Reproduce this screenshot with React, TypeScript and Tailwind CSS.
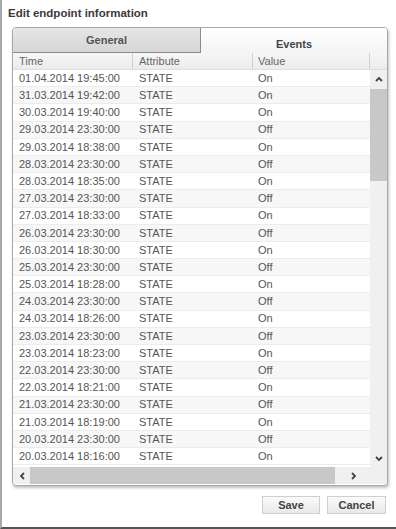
import React from "react"

const rows: [string, string][] = [
    ["01.04.2014 19:45:00", "On"],
    ["31.03.2014 19:42:00", "On"],
    ["30.03.2014 19:40:00", "On"],
    ["29.03.2014 23:30:00", "Off"],
    ["29.03.2014 18:38:00", "On"],
    ["28.03.2014 23:30:00", "Off"],
    ["28.03.2014 18:35:00", "On"],
    ["27.03.2014 23:30:00", "Off"],
    ["27.03.2014 18:33:00", "On"],
    ["26.03.2014 23:30:00", "Off"],
    ["26.03.2014 18:30:00", "On"],
    ["25.03.2014 23:30:00", "Off"],
    ["25.03.2014 18:28:00", "On"],
    ["24.03.2014 23:30:00", "Off"],
    ["24.03.2014 18:26:00", "On"],
    ["23.03.2014 23:30:00", "Off"],
    ["23.03.2014 18:23:00", "On"],
    ["22.03.2014 23:30:00", "Off"],
    ["22.03.2014 18:21:00", "On"],
    ["21.03.2014 23:30:00", "Off"],
    ["21.03.2014 18:19:00", "On"],
    ["20.03.2014 23:30:00", "Off"],
    ["20.03.2014 18:16:00", "On"],
]

function Chevron({ dir }: { dir: "up" | "down" | "left" | "right" }) {
    const d = {
        up: "M2 7 L5 4 L8 7",
        down: "M2 4 L5 7 L8 4",
        left: "M7 2 L4 5 L7 8",
        right: "M4 2 L7 5 L4 8",
    }[dir]
    return (
        <svg width={10} height={10} viewBox="0 0 10 10" fill="none">
            <path d={d} stroke="#444" strokeWidth={1.8} />
        </svg>
    )
}

export default function App() {
    return (
        <div
            className="relative w-[396px] h-[529px] bg-white border-l-2 border-l-[#a8a8a8] border-b-2 border-b-[#555] overflow-hidden"
            style={{ fontFamily: "'Liberation Sans', Arial, sans-serif" }}
        >
            <div className="pl-[6px] pt-[5px] h-[27px] text-[11.5px] font-bold text-[#3a3a3a] leading-[16px]">
                Edit endpoint information
            </div>

            <div className="ml-[10px] w-[376px] h-[459px] border border-[#a9a9a9] rounded-[4px] shadow-[1px_2px_3px_rgba(0,0,0,0.25)] flex flex-col overflow-hidden bg-white">
                {/* tabs */}
                <div className="flex h-[25px] shrink-0">
                    <div className="w-[188px] flex items-center justify-center bg-gradient-to-b from-[#e6e6e6] to-[#d6d6d6] border-r border-b border-[#8c8c8c] text-[11px] font-bold text-[#555]">
                        General
                    </div>
                    <div className="flex-1 flex items-end justify-center pb-[1px] bg-gradient-to-b from-white to-[#f4f4f4] text-[11px] font-bold text-[#444]">
                        Events
                    </div>
                </div>

                {/* header */}
                <div className="flex h-[17px] shrink-0 bg-gradient-to-b from-[#f6f6f6] to-[#ececec] border-b border-[#dedede] text-[11px] text-[#666]">
                    <div className="w-[120px] pl-[6px] border-r border-[#d0d0d0] leading-[16px]">Time</div>
                    <div className="w-[120px] pl-[6px] border-r border-[#d0d0d0] leading-[16px]">Attribute</div>
                    <div className="w-[117px] pl-[5px] border-r border-[#d0d0d0] leading-[16px]">Value</div>
                    <div className="flex-1" />
                </div>

                {/* body */}
                <div className="flex h-[397px] shrink-0">
                    <div className="w-[357px] overflow-hidden">
                        {rows.map(([t, v], i) => (
                            <div
                                key={i}
                                className={`flex h-[17.2px] items-center border-b border-[#ececec] text-[11px] text-[#555] ${i % 2 === 1 ? "bg-[#f7f7f7]" : "bg-white"}`}
                            >
                                <div className="w-[120px] pl-[6px]">{t}</div>
                                <div className="w-[120px] pl-[6px]">STATE</div>
                                <div className="w-[117px] pl-[5px]">{v}</div>
                            </div>
                        ))}
                    </div>
                    <div className="w-[17px] flex flex-col bg-[#f0f0f0]">
                        <div className="h-[18px] flex items-center justify-center">
                            <Chevron dir="up" />
                        </div>
                        <div className="mt-[1px] h-[92px] bg-[#c8c8c8]" />
                        <div className="flex-1" />
                        <div className="h-[18px] flex items-center justify-center">
                            <Chevron dir="down" />
                        </div>
                    </div>
                </div>

                {/* horizontal scrollbar */}
                <div className="flex h-[17px] shrink-0">
                    <div className="w-[357px] flex bg-[#f0f0f0]">
                        <div className="w-[17px] flex items-center justify-center">
                            <Chevron dir="left" />
                        </div>
                        <div className="w-[305px] bg-[#c8c8c8]" />
                        <div className="flex-1 flex items-center justify-center">
                            <Chevron dir="right" />
                        </div>
                    </div>
                    <div className="flex-1 bg-[#f0f0f0]" />
                </div>
            </div>

            <div className="flex justify-end gap-[7px] pr-[10px] mt-[10px]">
                <button className="w-[58px] h-[18px] border border-[#cfcfcf] bg-gradient-to-b from-[#fafafa] to-[#e9e9e9] text-[11px] font-bold text-[#444] leading-[16px]">
                    Save
                </button>
                <button className="w-[59px] h-[18px] border border-[#cfcfcf] bg-gradient-to-b from-[#fafafa] to-[#e9e9e9] text-[11px] font-bold text-[#444] leading-[16px]">
                    Cancel
                </button>
            </div>
        </div>
    )
}
